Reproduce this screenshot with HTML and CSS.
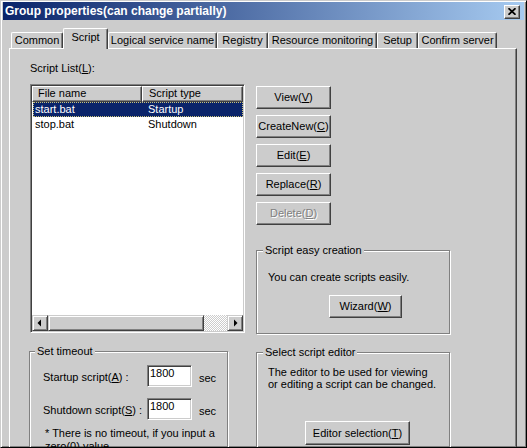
FILE: index.html
```html
<!DOCTYPE html>
<html lang="en">
<head>
<meta charset="utf-8">
<title>Group properties</title>
<link rel="stylesheet" href="styles.css">
</head>
<body>
<div class="window">
  <div class="titlebar">
    <span class="title">Group properties(can change partially)</span>
    <button class="close" type="button" aria-label="Close">
      <svg width="8" height="7" viewBox="0 0 8 7"><path d="M0.5 0.2L7.5 6.8M7.5 0.2L0.5 6.8" stroke="#000" stroke-width="1.7"/></svg>
    </button>
  </div>
  <div class="body">
    <div class="tabs">
      <div class="tab w-common">Common</div>
      <div class="tab active w-script">Script</div>
      <div class="tab w-logical">Logical service name</div>
      <div class="tab w-registry">Registry</div>
      <div class="tab w-resource">Resource monitoring</div>
      <div class="tab w-setup">Setup</div>
      <div class="tab w-confirm">Confirm server</div>
    </div>
    <div class="panel">
      <div class="col-left">
        <div class="label">Script List(<u>L</u>):</div>
        <div class="listview">
          <div class="lv-head">
            <div class="hcell c1">File name</div>
            <div class="hcell c2">Script type</div>
          </div>
          <div class="lv-row sel"><span class="c1">start.bat</span><span class="c2">Startup</span></div>
          <div class="lv-row"><span class="c1">stop.bat</span><span class="c2">Shutdown</span></div>
          <div class="lv-fill"></div>
          <div class="hscroll">
            <div class="sb-btn"><svg width="14" height="14" viewBox="0 0 14 14"><path d="M8 3.5L4.5 7L8 10.5Z" fill="#000"/></svg></div>
            <div class="sb-thumb"></div>
            <div class="sb-track"></div>
            <div class="sb-btn"><svg width="14" height="14" viewBox="0 0 14 14"><path d="M6 3.5L9.5 7L6 10.5Z" fill="#000"/></svg></div>
          </div>
        </div>
        <fieldset class="group timeout">
          <legend>Set timeout</legend>
          <div class="field first">
            <span class="flabel">Startup script(<u>A</u>) :</span>
            <div class="input">1800</div>
            <span class="unit">sec</span>
          </div>
          <div class="field">
            <span class="flabel">Shutdown script(<u>S</u>) :</span>
            <div class="input">1800</div>
            <span class="unit">sec</span>
          </div>
          <p class="note">* There is no timeout, if you input a<br>zero(0) value.</p>
        </fieldset>
      </div>
      <div class="col-right">
        <div class="btns">
          <button class="btn" type="button">View(<u>V</u>)</button>
          <button class="btn" type="button">CreateNew(<u>C</u>)</button>
          <button class="btn" type="button">Edit(<u>E</u>)</button>
          <button class="btn" type="button">Replace(<u>R</u>)</button>
          <button class="btn disabled" type="button">Delete(<u>D</u>)</button>
        </div>
        <fieldset class="group easy">
          <legend>Script easy creation</legend>
          <p class="gtext">You can create scripts easily.</p>
          <button class="btn wizard" type="button">Wizard(<u>W</u>)</button>
        </fieldset>
        <fieldset class="group editor">
          <legend>Select script editor</legend>
          <p class="gtext small">The editor to be used for viewing<br>or editing a script can be changed.</p>
          <button class="btn edsel" type="button">Editor selection(<u>T</u>)</button>
        </fieldset>
      </div>
    </div>
  </div>
</div>
</body>
</html>
```

FILE: styles.css
```css
* { box-sizing: border-box; }
html, body { margin: 0; padding: 0; }
body {
  background: #cccccc;
  font-family: "Liberation Sans", Arial, sans-serif;
  font-size: 11px;
  line-height: 13px;
  color: #000;
}
u { text-decoration: underline; text-underline-offset: 1px; }
p { margin: 0; }

.window {
  width: 527px;
  height: 448px;
  overflow: hidden;
  display: flex;
  flex-direction: column;
  background: #cccccc;
  border: 1px solid;
  border-color: #cccccc #000 #000 #cccccc;
  box-shadow: inset 1px 1px #fff, inset -1px -1px #808080;
  padding: 1px 2px 0;
}

.titlebar {
  flex: none;
  height: 18px;
  display: flex;
  align-items: center;
  justify-content: space-between;
  padding: 0 4px 0 2px;
  background: linear-gradient(90deg, #0a246a, #a6caf0);
}
.title {
  color: #fff;
  font-size: 12px;
  font-weight: bold;
  line-height: 14px;
  white-space: nowrap;
}
.close {
  width: 16px;
  height: 14px;
  padding: 0;
  margin-top: 1px;
  background: #cccccc;
  border: 1px solid;
  border-color: #fff #404040 #404040 #fff;
  box-shadow: inset -1px -1px #808080;
  display: flex;
  align-items: center;
  justify-content: center;
}
.close svg { display: block; }

.body {
  flex: 1;
  min-height: 0;
  display: flex;
  flex-direction: column;
  padding: 0 7px 0 6px;
}

.tabs {
  flex: none;
  display: flex;
  align-items: flex-end;
  height: 20px;
  margin-top: 8px;
  padding-left: 2px;
}
.tab {
  flex: none;
  height: 16px;
  display: flex;
  align-items: center;
  justify-content: center;
  white-space: nowrap;
  border: 1px solid;
  border-bottom: 0;
  border-color: #fff #404040 #404040 #fff;
  border-radius: 2px 2px 0 0;
  box-shadow: inset -1px 0 #808080;
}
.tab.active {
  height: 21px;
  margin-bottom: -1px;
  position: relative;
  z-index: 1;
  background: #cccccc;
  align-items: flex-start;
  padding-top: 2px;
}
.w-common { width: 52px; }
.w-script { width: 45px; }
.w-logical { width: 109px; }
.w-registry { width: 51px; }
.w-resource { width: 109px; }
.w-setup { width: 41px; }
.w-confirm { width: 79px; }

.panel {
  flex: none;
  height: 420px;
  display: flex;
  align-items: flex-start;
  padding: 13px 0 0 20px;
  border: 1px solid;
  border-color: #fff #404040 #404040 #fff;
  box-shadow: inset -1px -1px #808080;
}

.col-left {
  width: 215px;
  display: flex;
  flex-direction: column;
}
.label { height: 13px; }

.listview {
  margin-top: 9px;
  width: 215px;
  height: 249px;
  display: flex;
  flex-direction: column;
  background: #fff;
  border: 1px solid;
  border-color: #808080 #fff #fff #808080;
  box-shadow: inset 1px 1px #404040, inset -1px -1px #cccccc;
  padding: 1px;
}
.lv-head { display: flex; height: 16px; flex: none; }
.hcell {
  height: 16px;
  line-height: 13px;
  background: #cccccc;
  border: 1px solid;
  border-color: #fff #404040 #404040 #fff;
  box-shadow: inset -1px -1px #808080;
  white-space: nowrap;
}
.hcell.c1 { width: 110px; padding-left: 5px; }
.hcell.c2 { flex: 1; padding-left: 6px; }
.lv-row {
  flex: none;
  display: flex;
  height: 15px;
  line-height: 15px;
  margin-left: 1px;
  white-space: nowrap;
}
.lv-row .c1 { width: 109px; padding-left: 2px; }
.lv-row .c2 { flex: 1; padding-left: 6px; }
.lv-row.sel {
  background: #0a246a;
  color: #fff;
  outline: 1px dotted #c9c27a;
  outline-offset: -1px;
}
.lv-fill { flex: 1; }
.hscroll { flex: none; height: 16px; display: flex; }
.sb-btn, .sb-thumb {
  background: #cccccc;
  border: 1px solid;
  border-color: #cccccc #404040 #404040 #cccccc;
  box-shadow: inset 1px 1px #fff, inset -1px -1px #808080;
}
.sb-btn { width: 16px; display: flex; align-items: center; justify-content: center; }
.sb-btn svg { display: block; }
.sb-thumb { width: 156px; }
.sb-track {
  flex: 1;
  background: repeating-conic-gradient(#fff 0 25%, #cccccc 0 50%) 0 0 / 2px 2px;
}

.group {
  margin: 0;
  padding: 0;
  min-width: 0;
  border: 1px solid #808080;
  box-shadow: 1px 1px 0 #fff, inset 1px 1px 0 #fff;
}
.group legend {
  padding: 0 2px;
  margin-left: 6px;
  line-height: 13px;
  background: #cccccc;
}

.timeout {
  margin: 12px 0 0 -1px;
  width: 199px;
  padding: 0 0 20px 13px;
}
.timeout legend { margin-left: -8px; }
.field { display: flex; align-items: center; margin-top: 11px; }
.field.first { margin-top: 7px; }
.flabel { width: 104px; white-space: nowrap; padding-top: 2px; }
.input {
  width: 45px;
  height: 22px;
  background: #fff;
  border: 1px solid;
  border-color: #808080 #fff #fff #808080;
  box-shadow: inset 1px 1px #404040, inset -1px -1px #cccccc;
  padding: 1px 2px 0;
  line-height: 13px;
}
.unit { margin-left: 7px; padding-top: 4px; }
.note { margin-top: 7px; padding-left: 2px; white-space: nowrap; }

.col-right {
  width: 194px;
  margin-left: 11px;
  display: flex;
  flex-direction: column;
}
.btns { margin-top: 24px; display: flex; flex-direction: column; gap: 6px; }
.btn {
  font: inherit;
  color: #000;
  height: 23px;
  width: 75px;
  padding: 0;
  background: #cccccc;
  border: 1px solid;
  border-color: #fff #404040 #404040 #fff;
  box-shadow: inset -1px -1px #808080;
  display: flex;
  align-items: center;
  justify-content: center;
  white-space: nowrap;
}
.btn.disabled { color: #808080; text-shadow: 1px 1px 0 #fff; }

.easy { margin-top: 19px; padding: 0 0 15px 11px; }
.easy legend, .editor legend { margin-left: -5px; }
.easy .gtext { margin-top: 14px; }
.wizard { margin: 11px 0 0 61px; width: 73px; }

.editor { margin-top: 12px; padding: 0 0 20px 11px; }
.gtext.small { margin-top: 7px; line-height: 12px; }
.edsel { margin: 31px 0 0 37px; width: 105px; height: 24px; }
```
